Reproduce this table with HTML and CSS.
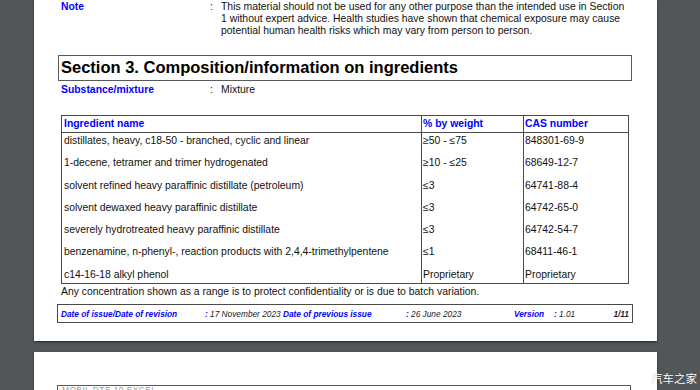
FILE: index.html
```html
<!DOCTYPE html>
<html>
<head>
<meta charset="utf-8">
<link rel="stylesheet" href="styles.css">
</head>
<body>
<div class="viewer">
  <div class="page page-one">
    <div class="field">
      <span class="label">Note</span>
      <span class="colon">:</span>
      <span class="value note-text">This material should not be used for any other purpose than the intended use in Section 1 without expert advice. Health studies have shown that chemical exposure may cause potential human health risks which may vary from person to person.</span>
    </div>

    <h2 class="section-title">Section 3. Composition/information on ingredients</h2>

    <div class="field">
      <span class="label">Substance/mixture</span>
      <span class="colon">:</span>
      <span class="value">Mixture</span>
    </div>

    <table class="ingredients">
      <thead>
        <tr>
          <th class="c-name">Ingredient name</th>
          <th class="c-pct">% by weight</th>
          <th class="c-cas">CAS number</th>
        </tr>
      </thead>
      <tbody>
        <tr><td>distillates, heavy, c18-50 - branched, cyclic and linear</td><td>≥50 - ≤75</td><td>848301-69-9</td></tr>
        <tr><td>1-decene, tetramer and trimer hydrogenated</td><td>≥10 - ≤25</td><td>68649-12-7</td></tr>
        <tr><td>solvent refined heavy paraffinic distillate (petroleum)</td><td>≤3</td><td>64741-88-4</td></tr>
        <tr><td>solvent dewaxed heavy paraffinic distillate</td><td>≤3</td><td>64742-65-0</td></tr>
        <tr><td>severely hydrotreated heavy paraffinic distillate</td><td>≤3</td><td>64742-54-7</td></tr>
        <tr><td>benzenamine, n-phenyl-, reaction products with 2,4,4-trimethylpentene</td><td>≤1</td><td>68411-46-1</td></tr>
        <tr class="last"><td>c14-16-18 alkyl phenol</td><td>Proprietary</td><td>Proprietary</td></tr>
      </tbody>
    </table>

    <p class="remark">Any concentration shown as a range is to protect confidentiality or is due to batch variation.</p>

    <div class="footer">
      <span class="f-label">Date of issue/Date of revision</span>
      <span class="f-value"><b>:</b> 17 November 2023</span>
      <span class="f-label">Date of previous issue</span>
      <span class="f-value"><b>:</b> 26 June 2023</span>
      <span class="f-label">Version</span>
      <span class="f-value"><b>:</b> 1.01</span>
      <span class="f-page">1/11</span>
    </div>
  </div>

  <div class="page page-two">
    <div class="header-box">MOBIL DTE 10 EXCEL</div>
  </div>
</div>
<div class="watermark">汽车之家</div>
</body>
</html>
```

FILE: styles.css
```css
html, body {
  margin: 0;
  padding: 0;
}

body {
  background: #525659;
  width: 700px;
  height: 390px;
  overflow: hidden;
  position: relative;
  font-family: "Liberation Sans", Arial, sans-serif;
  color: #111;
}

.viewer {
  padding-left: 34px;
  display: flex;
  flex-direction: column;
  gap: 11px;
}

.page {
  width: 623px;
  background: #fff;
  box-shadow: 0 1px 2px rgba(0, 0, 0, 0.55);
  box-sizing: border-box;
  padding-left: 23px;
}

.page-one {
  height: 341px;
  padding-top: 1px;
}

.page-two {
  height: 60px;
  padding-top: 33px;
}

.field {
  display: grid;
  grid-template-columns: 149px 11px 408px;
  padding-left: 4px;
  font-size: 10.4px;
  line-height: 12px;
}

.label {
  color: #0000ff;
  font-weight: bold;
}

.note-text {
  color: #111;
}

.section-title {
  margin: 18px 0 3px 1px;
  width: 574px;
  box-sizing: border-box;
  height: 26px;
  border: 1.5px solid #5a5a5a;
  font-size: 16.5px;
  line-height: 23px;
  padding-left: 2px;
  font-weight: bold;
  color: #000;
}

.ingredients {
  margin: 19px 0 0 4px;
  width: 568px;
  border-collapse: collapse;
  border: 1.5px solid #4a4a4a;
  font-size: 10.4px;
  line-height: 12px;
  table-layout: fixed;
}

.ingredients th,
.ingredients td {
  text-align: left;
  vertical-align: top;
  padding: 2px 3px 8.3px 1px;
  border-left: 1.5px solid #4a4a4a;
  white-space: nowrap;
}

.ingredients th {
  color: #0000ff;
  font-weight: bold;
  padding-bottom: 2px;
  border-bottom: 1.5px solid #4a4a4a;
}

.ingredients .c-name { width: 354px; }
.ingredients .c-pct { width: 97px; }

.ingredients tr.last td {
  padding-bottom: 2.6px;
}

.ingredients td:first-child,
.ingredients th:first-child {
  padding-left: 2px;
}

.remark {
  margin: 2px 0 0 4px;
  font-size: 10.4px;
  line-height: 12px;
}

.footer {
  margin: 6px 0 0 0;
  width: 576px;
  height: 19px;
  box-sizing: border-box;
  border: 1.5px solid #4a4a4a;
  display: grid;
  grid-template-columns: 144px 78px 123px 108px 40px 1fr auto;
  align-items: center;
  padding: 0 3px 0 3px;
  font-size: 8.3px;
  font-style: italic;
}

.f-label {
  color: #0000ff;
  font-weight: bold;
}

.f-value {
  color: #222;
}

.f-value b {
  color: #0000ff;
}

.f-page {
  color: #222;
  font-weight: bold;
}

.header-box {
  width: 574px;
  box-sizing: border-box;
  height: 30px;
  border: 1.5px solid #5a5a5a;
  padding: 0 0 0 4px;
  font-size: 8.3px;
  line-height: 9px;
  color: #9a9a9a;
  letter-spacing: 0.5px;
}

.watermark {
  position: absolute;
  left: 651px;
  top: 371px;
  font-family: "Noto Sans CJK SC", sans-serif;
  font-size: 11.5px;
  line-height: 14px;
  color: #fff;
  text-shadow: 0 0 1px rgba(0, 0, 0, 0.3);
  white-space: nowrap;
}
```
